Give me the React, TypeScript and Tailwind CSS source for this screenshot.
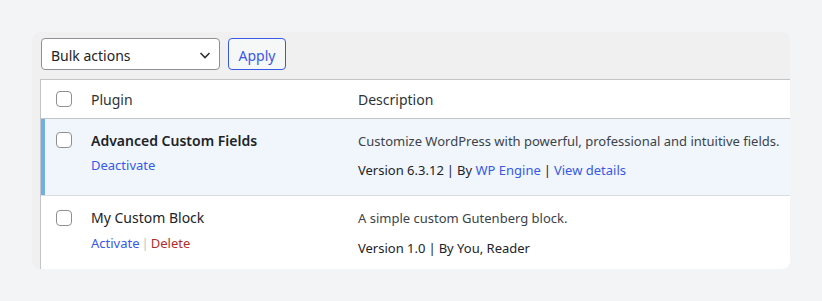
import { useState } from "react";

function Checkbox() {
  return (
    <span className="block w-4 h-4 rounded-[4px] border border-[#8c8f94] bg-white shrink-0" />
  );
}

function Sep({ light }: { light?: boolean }) {
  if (light) return <span className="mx-[2px] text-[#c3c4c7]">|</span>;
  return <span className="mx-[3px] text-[#1d2327]">|</span>;
}

export default function App() {
  const [action] = useState("Bulk actions");

  return (
    <div
      className="min-h-[301px] bg-[#f3f4f6] px-8 pt-8 text-[14px] text-[#1d2327]"
      style={{ fontFamily: '"Noto Sans", "Open Sans", Arial, sans-serif' }}
    >
      <div className="w-[758px] rounded-lg bg-[#f0f0f1] overflow-hidden">
        {/* toolbar */}
        <div className="flex items-center gap-2 pl-[9px] pt-[6px] h-[47px] pb-[9px]">
          <div className="flex items-center justify-between w-[179px] h-8 rounded-[4px] border border-[#8c8f94] bg-white pl-[9px] pr-[7px]">
            <span className="leading-5 pt-[3px]">{action}</span>
            <svg width="14" height="14" viewBox="0 0 14 14" fill="none" className="mt-px">
              <path d="M2.5 5l4.5 4.5L11.5 5" stroke="#2c3338" strokeWidth="1.6" />
            </svg>
          </div>
          <button className="h-8 w-[58px] rounded-[4px] border border-[#3858e9] bg-[#f6f7f7] text-[#3858e9] leading-5 pt-[3px]">
            Apply
          </button>
        </div>

        {/* table */}
        <div className="ml-2 border-l border-t border-[#c3c4c7] bg-white">
          <div className="flex items-center h-[39px] border-b border-[#c3c4c7]">
            <div className="w-[50px] pl-[15px]">
              <Checkbox />
            </div>
            <div className="w-[267px] text-[#2c3338] pt-px">Plugin</div>
            <div className="flex-1 text-[#2c3338] pt-px">Description</div>
          </div>

          <div className="flex h-[77px] border-b border-[#dcdcde] bg-[#f0f6fc] shadow-[inset_4px_0_0_#72aee6]">
            <div className="w-[50px] pl-[15px] pt-[13px]">
              <Checkbox />
            </div>
            <div className="w-[267px] pt-3">
              <div className="font-semibold leading-5 text-[#1d2327]">Advanced Custom Fields</div>
              <div className="mt-1 leading-5 text-[13px] text-[#3858e9]">Deactivate</div>
            </div>
            <div className="flex-1 pt-3 text-[13px]">
              <div className="leading-5 text-[#3c434a]">
                Customize WordPress with powerful, professional and intuitive fields.
              </div>
              <div className="mt-[9px] leading-5">
                Version 6.3.12<Sep />By <span className="text-[#3858e9]">WP Engine</span>
                <Sep />
                <span className="text-[#3858e9]">View details</span>
              </div>
            </div>
          </div>

          <div className="flex h-[73px]">
            <div className="w-[50px] pl-[15px] pt-[14px]">
              <Checkbox />
            </div>
            <div className="w-[267px] pt-3">
              <div className="leading-5 text-[#1d2327]">My Custom Block</div>
              <div className="mt-[5px] leading-5 text-[13px]">
                <span className="text-[#3858e9]">Activate</span>
                <Sep light />
                <span className="text-[#b32d2e]">Delete</span>
              </div>
            </div>
            <div className="flex-1 pt-3 text-[13px]">
              <div className="leading-5 text-[#3c434a]">A simple custom Gutenberg block.</div>
              <div className="mt-[10px] leading-5">
                Version 1.0<Sep />By You, Reader
              </div>
            </div>
          </div>
        </div>
      </div>
    </div>
  );
}
